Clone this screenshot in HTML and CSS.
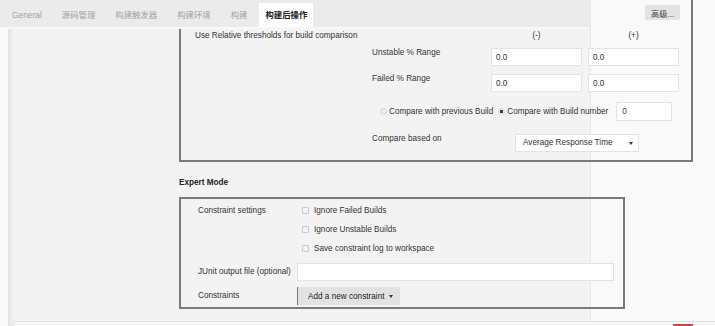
FILE: index.html
```html
<!DOCTYPE html>
<html lang="zh-CN">
<head>
    <meta charset="UTF-8">
    <meta name="viewport" content="width=device-width, initial-scale=1.0">
    <title>构建后操作</title>
    <link rel="stylesheet" href="styles.css">
</head>
<body>
    <div class="page">
        <div class="topbar">
            <ul class="tabs">
                <li class="tab">General</li>
                <li class="tab">源码管理</li>
                <li class="tab">构建触发器</li>
                <li class="tab">构建环境</li>
                <li class="tab">构建</li>
                <li class="tab active">构建后操作</li>
            </ul>
            <div class="topbar-side">
                <button class="btn-advanced">高级...</button>
            </div>
        </div>

        <div class="content">
            <div class="section thresholds">
                <div class="row-head">
                    <span class="title">Use Relative thresholds for build comparison</span>
                    <span class="col-head">(-)</span>
                    <span class="col-head">(+)</span>
                </div>

                <div class="row-range">
                    <label class="range-label">Unstable % Range</label>
                    <input class="field range" type="text" value="0.0">
                    <input class="field range" type="text" value="0.0">
                </div>

                <div class="row-range gap-8">
                    <label class="range-label">Failed % Range</label>
                    <input class="field range" type="text" value="0.0">
                    <input class="field range" type="text" value="0.0">
                </div>

                <div class="row-radio">
                    <input class="radio" type="radio" name="compare">
                    <span class="radio-text">Compare with previous Build</span>
                    <input class="radio second" type="radio" name="compare" checked>
                    <span class="radio-text">Compare with Build number</span>
                    <input class="field build-no" type="text" value="0">
                </div>

                <div class="row-compare">
                    <label class="compare-label">Compare based on</label>
                    <div class="select">
                        <span>Average Response Time</span>
                        <span class="caret"></span>
                    </div>
                </div>
            </div>

            <div class="expert-title">Expert Mode</div>

            <div class="section expert">
                <div class="exp-row check-row">
                    <span class="exp-label">Constraint settings</span>
                    <input class="check" type="checkbox">
                    <span class="check-text">Ignore Failed Builds</span>
                </div>
                <div class="exp-row check-row">
                    <span class="exp-label"></span>
                    <input class="check" type="checkbox">
                    <span class="check-text">Ignore Unstable Builds</span>
                </div>
                <div class="exp-row check-row last">
                    <span class="exp-label"></span>
                    <input class="check" type="checkbox">
                    <span class="check-text">Save constraint log to workspace</span>
                </div>
                <div class="exp-row field-row">
                    <span class="exp-label">JUnit output file (optional)</span>
                    <input class="field junit" type="text">
                </div>
                <div class="exp-row field-row">
                    <span class="exp-label">Constraints</span>
                    <button class="btn-constraint">Add a new constraint <span class="caret"></span></button>
                </div>
            </div>
        </div>

        <div class="footer-bar">
            <span class="save-edge" aria-label="保存"></span>
        </div>
    </div>
</body>
</html>
```

FILE: styles.css
```css
* {
    box-sizing: border-box;
}
body {
    margin: 0;
    font-family: "Liberation Sans", Arial, "Noto Sans CJK SC", sans-serif;
    font-size: 8.2px;
    line-height: 12px;
    color: #333;
    overflow: hidden;
}
.page {
    position: relative;
    height: 100vh;
    background: linear-gradient(to right, #fafafa 0, #fafafa 8px, #e2e2e2 8px, #f3f3f3 14px, #f3f3f3 590px, #e8e8e8 590px, #e8e8e8 591px, #f9f9f9 591px);
}

/* barra de pestañas */
.topbar {
    position: absolute;
    top: 0;
    left: 0;
    right: 0;
    display: flex;
    height: 29px;
}
.tabs {
    display: flex;
    width: 590px;
    margin: 0;
    padding: 3px 0 0 2px;
    list-style: none;
    background: #ebebeb;
    border-bottom: 2px solid #f8f8f8;
}
.tab {
    padding: 0 10px;
    line-height: 24px;
    font-size: 8.4px;
    color: #a3a3a3;
}
.tab.active {
    margin-left: 2px;
    padding: 0 6px;
    background: #fff;
    color: #222;
    font-weight: bold;
}
.topbar-side {
    flex: 1;
    padding: 5px 0 0 55px;
}
.btn-advanced {
    height: 15px;
    padding: 0 6px;
    border: none;
    border-radius: 1px;
    background: #e3e3e3;
    color: #444;
    font-family: inherit;
    font-size: 8.2px;
}

/* contenido */
.content {
    padding-left: 179px;
}
.section {
    border: 2px solid #7a7a7a;
}
.thresholds {
    width: 514px;
    border-top: 0;
    padding: 30px 0 8px 0;
}
.row-head {
    display: flex;
    padding-left: 14px;
}
.title {
    width: 296px;
}
.col-head {
    width: 91px;
    text-align: center;
}
.col-head + .col-head {
    margin-left: 6px;
}
.row-range {
    display: flex;
    align-items: flex-start;
    margin-top: 6px;
    padding-left: 191px;
}
.row-range.gap-8 {
    margin-top: 8px;
}
.range-label {
    width: 119px;
    line-height: 10px;
}
.field {
    height: 18px;
    margin: 0;
    padding: 0 4px;
    border: 1px solid #e4e4e4;
    background: #fff;
    color: #333;
    font-family: inherit;
    font-size: 8.2px;
    outline: none;
}
.field.range {
    width: 91px;
}
.field.range + .field.range {
    margin-left: 6px;
}
.row-radio {
    display: flex;
    align-items: center;
    height: 19px;
    margin-top: 10px;
    padding-left: 199px;
}
.radio {
    appearance: none;
    width: 7px;
    height: 7px;
    margin: 0;
    border: 1px solid #d6d6d6;
    border-radius: 50%;
    background: #ececec;
}
.radio:checked {
    background: radial-gradient(circle, #3a3a3a 0, #3a3a3a 1.4px, #ececec 2px);
}
.radio.second {
    margin-left: 5px;
}
.radio-text {
    margin-left: 2px;
}
.field.build-no {
    width: 56px;
    height: 19px;
    margin-left: 8px;
    padding-left: 5px;
}
.row-compare {
    display: flex;
    align-items: flex-start;
    margin-top: 13px;
    padding-left: 191px;
}
.compare-label {
    width: 143px;
    line-height: 9px;
}
.select {
    display: flex;
    align-items: center;
    justify-content: space-between;
    width: 124px;
    height: 18px;
    padding: 0 5px 0 7px;
    border: 1px solid #e4e4e4;
    background: #fff;
}
.caret {
    display: inline-block;
    width: 0;
    height: 0;
    border-left: 2px solid transparent;
    border-right: 2px solid transparent;
    border-top: 3px solid #333;
}

/* modo experto */
.expert-title {
    margin-top: 15px;
    font-weight: bold;
    color: #222;
}
.expert {
    width: 446px;
    margin-top: 8px;
    padding: 5px 9px 2px 17px;
}
.exp-row {
    display: flex;
    align-items: center;
}
.exp-label {
    flex: none;
    width: 99px;
}
.check-row {
    height: 13px;
    margin-bottom: 6px;
}
.check-row.last {
    margin-bottom: 8px;
}
.check {
    appearance: none;
    width: 7px;
    height: 7px;
    margin: 0 0 0 5px;
    border: 1px solid #c9c9c9;
    border-radius: 1px;
    background: #f3f3f3;
}
.check-text {
    margin-left: 5px;
}
.field-row {
    height: 18px;
}
.field-row + .field-row {
    margin-top: 6px;
}
.field.junit {
    flex: 1;
}
.btn-constraint {
    display: flex;
    align-items: center;
    width: 103px;
    height: 18px;
    padding: 0 0 0 10px;
    border: none;
    border-left: 1px solid #777;
    background: #e2e2e2;
    color: #222;
    font-family: inherit;
    font-size: 8.2px;
}
.btn-constraint .caret {
    margin-left: 5px;
}

/* barra inferior */
.footer-bar {
    display: flex;
    height: 5px;
    margin: 12px 0 0 13px;
    padding: 2px 0 0 659px;
    border-top: 1px solid #e2e2e2;
    border-left: 1px solid #e2e2e2;
    background: #f7f7f7;
}
.save-edge {
    width: 20px;
    background: #c9463d;
}
```
